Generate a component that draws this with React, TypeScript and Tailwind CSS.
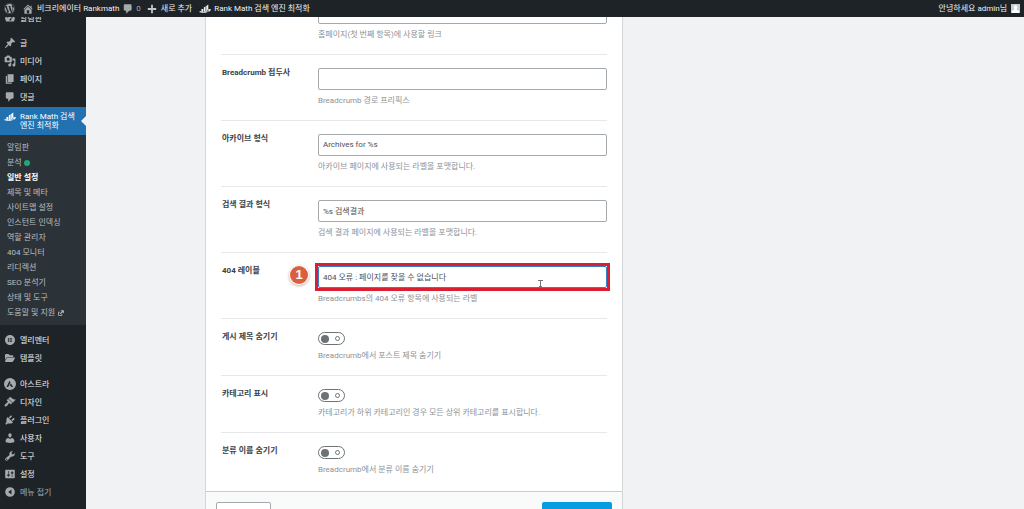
import type { ReactNode } from 'react';
import { FaElementor, FaFolderOpen, FaWordpress } from 'react-icons/fa6';

/** Dashicon outlines, all on a 20x20 grid. */
const PATHS = {
  dashboard:
    'M3.76 16h12.48c1.1-1.37 1.76-3.11 1.76-5 0-4.42-3.58-8-8-8s-8 3.58-8 8c0 1.89.66 3.63 1.76 5zM9 5h2v2H9zM5 7h2v2H5zm8 0h2v2h-2zM9 13l4-5-1 6H9z',
  post: 'M10.44 3.02l1.82-1.82 6.36 6.35-1.83 1.82c-1.05-.68-2.48-.57-3.41.36l-.75.75c-.92.93-1.04 2.35-.35 3.41l-1.83 1.82-2.41-2.41-2.8 2.79c-.42.42-3.38 2.71-3.8 2.29s1.86-3.39 2.28-3.81l2.79-2.79L4.1 9.36l1.83-1.82c1.05.69 2.48.57 3.4-.36l.75-.75c.93-.92 1.05-2.35.36-3.41z',
  media:
    'M13 11V4c0-.55-.45-1-1-1h-1.67L9 1H5L3.67 3H2c-.55 0-1 .45-1 1v7c0 .55.45 1 1 1h10c.55 0 1-.45 1-1zM7 4.5c1.38 0 2.5 1.12 2.5 2.5S8.38 9.5 7 9.5 4.5 8.38 4.5 7 5.62 4.5 7 4.5zM14 6h5v10.5c0 1.38-1.12 2.5-2.5 2.5S14 17.88 14 16.5s1.12-2.5 2.5-2.5c.17 0 .34.02.5.05V9h-3V6zm-4 8.05V13h2v3.5c0 1.38-1.12 2.5-2.5 2.5S7 17.88 7 16.5 8.12 14 9.5 14c.17 0 .34.02.5.05z',
  page: 'M6 15V2h10v13H6zm-1 1h8v2H3V5h2v11z',
  comment:
    'M5 2h9c1.1 0 2 .9 2 2v7c0 1.1-.9 2-2 2h-2l-5 5v-5H5c-1.1 0-2-.9-2-2V4c0-1.1.9-2 2-2z',
  home: 'M16 8.5l1.53 1.53-1.06 1.06L10 4.6l-6.47 6.49-1.06-1.06L10 2.5l4 4v-2h2v4zm-6-2.46l6 5.99V18H4v-5.97zM12 17v-5H8v5h4z',
  plus: 'M17 8.5v3h-5.5V17h-3v-5.5H3v-3h5.5V3h3v5.5H17z',
  rank: 'M4 10h3v4H4zM8 7.500l3-2V14H8zM12 5l3.500-2.500V14H12zM0 15c2-2 4-2 6-1 4 1 7 0 9-2l-1-1 6-1-2 4.500-1-1c-3 3-9 4-17 1.500z',
  appearance:
    'M14.48 11.06L7.41 3.99l1.5-1.5c.5-.56 2.3-.47 3.51.32 1.21.8 1.43 1.28 2.91 2.1 1.18.64 2.45 1.26 4.45.85zm-.71.71L6.7 4.7 4.93 6.47c-.39.39-.39 1.02 0 1.41l1.06 1.06c.39.39.39 1.03 0 1.42-.6.6-1.43 1.11-2.21 1.69-.35.26-.7.53-1.01.84C1.43 14.23.4 16.08 1.4 17.07c.99 1 2.84-.03 4.18-1.36.31-.31.58-.66.85-1.02.57-.78 1.08-1.61 1.69-2.21.39-.39 1.02-.39 1.41 0l1.06 1.06c.39.39 1.02.39 1.41 0z',
  plugins:
    'M13.11 4.36L9.87 7.6 8 5.73l3.24-3.24c.35-.34 1.05-.2 1.56.32.52.51.66 1.21.31 1.55zm-8 1.77l.91-1.12 9.01 9.01-1.19.84c-.71.71-2.63 1.16-3.82 1.16H6.14L4.9 17.26c-.59.59-1.54.59-2.12 0-.59-.58-.59-1.53 0-2.12l1.24-1.24v-3.88c0-1.13.4-3.19 1.09-3.89zm7.26 3.97l3.24-3.24c.34-.35 1.04-.21 1.55.31.52.51.66 1.21.31 1.55l-3.24 3.25z',
  users:
    'M10 9.25c-2.27 0-2.73-3.44-2.73-3.44C7 4.02 7.82 2 9.97 2c2.16 0 2.98 2.02 2.71 3.81 0 0-.41 3.44-2.68 3.44zm0 2.57L12.72 10c2.39 0 4.52 2.33 4.52 4.53v2.49s-3.65 1.13-7.24 1.13c-3.65 0-7.24-1.13-7.24-1.13v-2.49c0-2.25 1.94-4.48 4.47-4.48z',
  tools:
    'M16.68 9.77c-1.34 1.34-3.3 1.67-4.95.99l-5.41 6.52c-.99.99-2.59.99-3.58 0s-.99-2.59 0-3.57l6.52-5.42c-.68-1.65-.35-3.61.99-4.95 1.28-1.28 3.12-1.62 4.72-1.06l-2.89 2.89 2.82 2.82 2.86-2.87c.53 1.58.18 3.39-1.08 4.65zM3.81 16.21c.4.39 1.04.39 1.43 0 .4-.4.4-1.04 0-1.43-.39-.4-1.03-.4-1.43 0-.39.39-.39 1.03 0 1.43z',
  settings:
    'M18 16V4c0-.55-.45-1-1-1H3c-.55 0-1 .45-1 1v12c0 .55.45 1 1 1h14c.55 0 1-.45 1-1zM8 11h1c.55 0 1 .45 1 1s-.45 1-1 1H8v1.500c0 .28-.22.5-.5.5s-.5-.22-.5-.5V13H6c-.55 0-1-.45-1-1s.45-1 1-1h1V5.500c0-.28.22-.5.5-.5s.5.22.5.5V11zm5-2h-1c-.55 0-1-.45-1-1s.45-1 1-1h1V5.500c0-.28.22-.5.5-.5s.5.22.5.5V7h1c.55 0 1 .45 1 1s-.45 1-1 1h-1v5.500c0 .28-.22.5-.5.5s-.5-.22-.5-.5V9z',
  astra:
    'M10 0a10 10 0 1 0 0 20 10 10 0 0 0 0-20zM9.200 4.500l1.500 3L7 15H4.200zM11.400 8.800L15.200 15h-3l-.9-1.900H9.400z',
  collapse: 'M10 2a8 8 0 1 0 0 16 8 8 0 0 0 0-16zm2.500 4v8L7 10z',
  external: 'M9 3h8v8l-3-3-5 5-2-2 5-5zM3 7h4v2H5v6h6v-2h2v4H3z',
};

type IconName = keyof typeof PATHS;

function Icon({ name }: { name: IconName }) {
  return (
    <svg viewBox="0 0 20 20" className="size-3 shrink-0" fill="currentColor" aria-hidden="true">
      <path fillRule="evenodd" d={PATHS[name]} />
    </svg>
  );
}

interface MenuEntry {
  label: string;
  icon: ReactNode;
}

const CONTENT_MENU: MenuEntry[] = [
  { label: '글', icon: <Icon name="post" /> },
  { label: '미디어', icon: <Icon name="media" /> },
  { label: '페이지', icon: <Icon name="page" /> },
  { label: '댓글', icon: <Icon name="comment" /> },
];

const SUBMENU = [
  '알림판',
  '분석',
  '일반 설정',
  '제목 및 메타',
  '사이트맵 설정',
  '인스턴트 인덱싱',
  '역할 관리자',
  '404 모니터',
  '리디렉션',
  'SEO 분석기',
  '상태 및 도구',
  '도움말 및 지원',
];

const BUILDER_MENU: MenuEntry[] = [
  { label: '엘리멘터', icon: <FaElementor className="size-[10px]" /> },
  { label: '템플릿', icon: <FaFolderOpen className="size-[10px]" /> },
];

const SITE_MENU: MenuEntry[] = [
  { label: '아스트라', icon: <Icon name="astra" /> },
  { label: '디자인', icon: <Icon name="appearance" /> },
  { label: '플러그인', icon: <Icon name="plugins" /> },
  { label: '사용자', icon: <Icon name="users" /> },
  { label: '도구', icon: <Icon name="tools" /> },
  { label: '설정', icon: <Icon name="settings" /> },
];

function AdminBar() {
  return (
    <header className="relative z-10 flex h-[17px] shrink-0 items-center bg-[#1d2327] pr-1 pl-1 text-[8px] text-[#f0f0f1]">
      <a href="#wordpress" aria-label="WordPress" className="text-[#a7aaad]">
        <FaWordpress className="size-[11px]" />
      </a>
      <a href="#site" className="ml-[7px] flex items-center gap-[3px]">
        <span className="text-[#a7aaad]">
          <Icon name="home" />
        </span>
        <span className="pt-px">비크리에이터 Rankmath</span>
      </a>
      <a href="#comments" className="ml-[3px] flex items-center gap-[2px] text-[#a7aaad]">
        <Icon name="comment" />
        <span className="pt-px">0</span>
      </a>
      <a href="#new" className="ml-[5px] flex items-center gap-[3px]">
        <span className="text-[#c3c6c9]">
          <Icon name="plus" />
        </span>
        <span className="pt-px">새로 추가</span>
      </a>
      <a href="#rank-math" className="ml-[7px] flex items-center gap-[3px]">
        <Icon name="rank" />
        <span className="pt-px">Rank Math 검색 엔진 최적화</span>
      </a>
      <a href="#profile" className="ml-auto flex items-center gap-1">
        <span className="pt-px">안녕하세요 admin님</span>
        <svg viewBox="0 0 20 20" className="size-[9px]" aria-hidden="true">
          <path fill="#c8cbcd" d="M0 0h20v20H0z" />
          <path fill="#fff" d="M10 3a4 4 0 0 1 4 4c0 2-1 4-2 5l6 3v5H2v-5l6-3c-1-1-2-3-2-5a4 4 0 0 1 4-4z" />
        </svg>
      </a>
    </header>
  );
}

function MenuItem({ label, icon }: MenuEntry) {
  return (
    <li>
      <a href={`#${label}`} className="flex h-[18px] items-center text-[#f0f0f1]">
        <span className="flex w-5 justify-center pr-px text-[#a7aaad]">{icon}</span>
        <span className="pt-[2px]">{label}</span>
      </a>
    </li>
  );
}

function Sidebar() {
  return (
    <nav className="w-[86px] shrink-0 bg-[#1d2327] text-[8px]">
      <ul className="-mt-2">
        <MenuItem label="알림판" icon={<Icon name="dashboard" />} />
      </ul>
      <ul className="mt-[7px]">
        {CONTENT_MENU.map((entry) => (
          <MenuItem key={entry.label} {...entry} />
        ))}
      </ul>
      <div className="mt-px">
        <a
          href="#rank-math"
          className="relative flex items-start bg-[#2271b1] py-[5px] leading-[9px] text-white"
        >
          <span className="-mt-px flex w-5 justify-center pr-px">
            <Icon name="rank" />
          </span>
          <span>
            Rank Math 검색
            <br />
            엔진 최적화
          </span>
          <span className="absolute top-1/2 right-0 -translate-y-1/2 border-y-[5px] border-r-[5px] border-y-transparent border-r-[#f0f2f4]" />
        </a>
        <ul className="bg-[#2c3338] py-[5px] text-[#b9bdc1]">
          {SUBMENU.map((label) => (
            <li key={label}>
              <a
                href={`#${label}`}
                className={`flex h-[15px] items-center gap-[2px] pl-[7px] ${
                  label === '일반 설정' ? 'font-bold text-white' : ''
                }`}
              >
                {label}
                {label === '분석' && <span className="size-[6px] rounded-full bg-[#1fa67a]" />}
                {label === '도움말 및 지원' && (
                  <svg viewBox="0 0 20 20" className="size-2" fill="currentColor" aria-hidden="true">
                    <path d={PATHS.external} />
                  </svg>
                )}
              </a>
            </li>
          ))}
        </ul>
      </div>
      <ul className="mt-[6px]">
        {BUILDER_MENU.map((entry) => (
          <MenuItem key={entry.label} {...entry} />
        ))}
      </ul>
      <ul className="mt-2">
        {SITE_MENU.map((entry) => (
          <MenuItem key={entry.label} {...entry} />
        ))}
        <li>
          <button type="button" className="flex h-[18px] items-center text-[#a7aaad]">
            <span className="flex w-5 justify-center pr-px">
              <Icon name="collapse" />
            </span>
            <span className="pt-[2px]">메뉴 접기</span>
          </button>
        </li>
      </ul>
    </nav>
  );
}

interface RowProps {
  id: string;
  label?: string;
  help: string;
  children: ReactNode;
}

function Row({ id, label, help, children }: RowProps) {
  return (
    <div className="flex border-b border-[#e6e8ea] pb-3 last:border-b-0 last:pb-[14px]">
      <div className="w-[97px] shrink-0 pt-[11px] pl-px text-[8px] leading-[14px] font-bold text-[#3c4348]">
        {label && <label htmlFor={id}>{label}</label>}
      </div>
      <div className="min-w-0 flex-1 pt-[13px]">
        {children}
        <p className="mt-1 text-[8px] leading-[14px] text-[#8d9296]">{help}</p>
      </div>
    </div>
  );
}

interface TextInputProps {
  id: string;
  value: string;
  name?: string;
  active?: boolean;
}

function TextInput({ id, value, name, active = false }: TextInputProps) {
  return (
    <input
      id={id}
      type="text"
      aria-label={name}
      defaultValue={value}
      className={`block h-[22px] w-full rounded-[2px] border bg-white px-1 pb-[2px] text-[8px] text-[#4a5055] outline-none ${
        active ? 'border-[#3582c4]' : 'border-[#a4a9ad]'
      }`}
    />
  );
}

function Toggle({ id }: { id: string }) {
  return (
    <span className="relative flex h-[13px] w-[27px] items-center justify-between rounded-full border border-[#6c7377] pr-1 pl-[2px]">
      <input id={id} type="checkbox" className="absolute inset-0 size-full appearance-none" />
      <span className="size-2 rounded-full bg-[#6c7377]" />
      <span className="size-[5px] rounded-full border border-[#6c7377]" />
    </span>
  );
}

export default function App() {
  return (
    <div
      lang="ko"
      className="flex h-screen flex-col overflow-hidden bg-[#f0f2f4] font-['Roboto','Noto_Sans_CJK_KR',sans-serif]"
    >
      <AdminBar />
      <div className="flex min-h-0 flex-1">
        <Sidebar />
        <main className="min-w-0 flex-1 pl-[119px]">
          <form className="-mt-7 max-w-[418px] border border-t-0 border-[#d3d7da] bg-white">
            <div className="px-[15px]">
              <Row id="home-link" help="홈페이지(첫 번째 항목)에 사용할 링크">
                <TextInput id="home-link" name="홈페이지 링크" value="https://rankmath.com" />
              </Row>
              <Row id="prefix" label="Breadcrumb 접두사" help="Breadcrumb 경로 프리픽스">
                <TextInput id="prefix" value="" />
              </Row>
              <Row id="archive" label="아카이브 형식" help="아카이브 페이지에 사용되는 라벨을 포맷합니다.">
                <TextInput id="archive" value="Archives for %s" />
              </Row>
              <Row id="search" label="검색 결과 형식" help="검색 결과 페이지에 사용되는 라벨을 포맷합니다.">
                <TextInput id="search" value="%s 검색결과" />
              </Row>
              <Row id="not-found" label="404 레이블" help="Breadcrumbs의 404 오류 항목에 사용되는 라벨">
                <div className="relative">
                  <TextInput id="not-found" value="404 오류 : 페이지를 찾을 수 없습니다" active />
                  <span className="pointer-events-none absolute -inset-[3px] border-[3px] border-[#dc1f30]" />
                  <span className="absolute top-0 -left-7 flex size-[18px] items-center justify-center rounded-full bg-[#d9603f] font-['Liberation_Sans',sans-serif] text-[13px] font-bold text-white shadow-[0_0_0_1px_#fff,0_1px_3px_1px_#d0a89c]">
                    1
                  </span>
                  <svg
                    viewBox="0 0 5 9"
                    className="pointer-events-none absolute right-16 bottom-0 h-[9px] w-[5px]"
                    fill="none"
                    stroke="#777"
                    aria-hidden="true"
                  >
                    <path d="M0 1.500h5M2.500 1v7M1 7.500h3" />
                  </svg>
                </div>
              </Row>
              <Row id="hide-title" label="게시 제목 숨기기" help="Breadcrumb에서 포스트 제목 숨기기">
                <Toggle id="hide-title" />
              </Row>
              <Row
                id="show-category"
                label="카테고리 표시"
                help="카테고리가 하위 카테고리인 경우 모든 상위 카테고리를 표시합니다."
              >
                <Toggle id="show-category" />
              </Row>
              <Row id="hide-taxonomy" label="분류 이름 숨기기" help="Breadcrumb에서 분류 이름 숨기기">
                <Toggle id="hide-taxonomy" />
              </Row>
            </div>
            <footer className="flex justify-between border-t border-[#c9cdd0] bg-[#f9fbfb] p-[10px]">
              <button
                type="button"
                aria-label="옵션 재설정"
                className="h-5 w-[55px] rounded-[2px] border border-[#a4a9ad] bg-white"
              />
              <button
                type="submit"
                aria-label="변경 사항 저장"
                className="h-5 w-[70px] rounded-[2px] bg-[#069de3]"
              />
            </footer>
          </form>
        </main>
      </div>
    </div>
  );
}
